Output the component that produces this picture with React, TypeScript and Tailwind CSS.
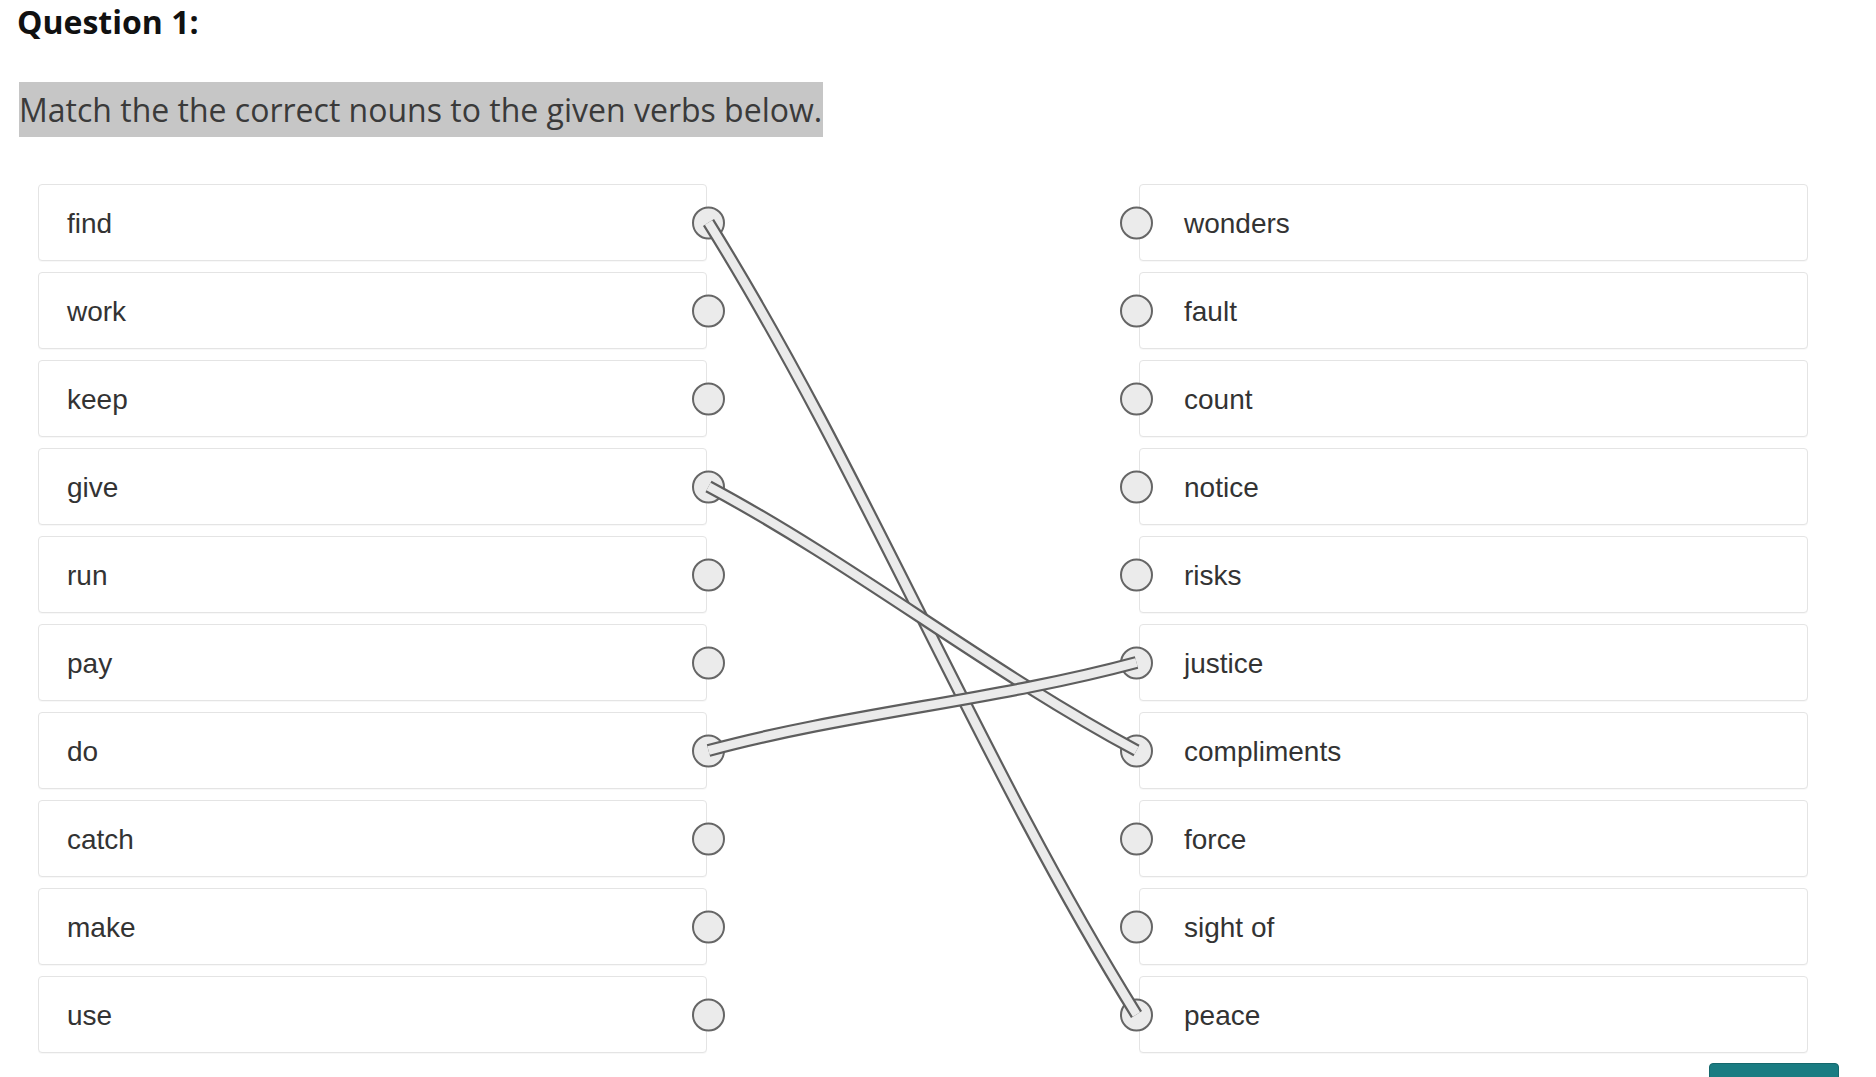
import React from "react";

const leftItems = ["find", "work", "keep", "give", "run", "pay", "do", "catch", "make", "use"];
const rightItems = ["wonders", "fault", "count", "notice", "risks", "justice", "compliments", "force", "sight of", "peace"];
const links: [number, number][] = [
  [0, 9],
  [3, 6],
  [6, 5],
];

const PITCH = 88;
const LX = 670.5;
const RX = 1098.5;
const CY0 = 38.5;

function ropePath(a: number, b: number) {
  const x1 = LX;
  const y1 = CY0 + a * PITCH;
  const x2 = RX;
  const y2 = CY0 + b * PITCH;
  const dx = (x2 - x1) / 3;
  const dy = (y2 - y1) / 3;
  const phi = (-3.5 * Math.PI) / 180;
  const ux = dx * Math.cos(phi) - dy * Math.sin(phi);
  const uy = dx * Math.sin(phi) + dy * Math.cos(phi);
  return `M ${x1} ${y1} C ${x1 + ux} ${y1 + uy} ${x2 - ux} ${y2 - uy} ${x2} ${y2}`;
}

function Circle({ side }: { side: "left" | "right" }) {
  return (
    <span
      className={
        side === "left"
          ? "absolute right-[-19px] top-1/2 -translate-y-1/2 w-[33px] h-[33px] rounded-full bg-[#ebebeb] border-2 border-[#666666]"
          : "absolute left-[-20px] top-1/2 -translate-y-1/2 w-[33px] h-[33px] rounded-full bg-[#ebebeb] border-2 border-[#666666]"
      }
    />
  );
}

export default function App() {
  return (
    <div className="min-h-screen bg-white pl-[19px] overflow-hidden">
      <h1 className="font-['Open_Sans',sans-serif] font-bold text-[32px] leading-[43px] text-[#111] ml-[-2px]">
        Question 1:
      </h1>
      <div className="mt-[39px]">
        <span className="inline-block bg-[#c6c6c6] font-['Open_Sans',sans-serif] text-[32px] leading-[55px] text-[#3a3a3a] pr-[1px]">
          Match the the correct nouns to the given verbs below.
        </span>
      </div>

      <div className="relative ml-[19px] mt-[47px] w-[1770px] flex justify-between font-['Liberation_Sans',Arial,sans-serif] text-[28px] text-[#333333]">
        <div className="flex flex-col gap-[11px] w-[669px]">
          {leftItems.map((t) => (
            <div
              key={t}
              className="relative h-[77px] flex items-center pl-[28px] pt-[2px] bg-white border border-[#e4e4e4] rounded-[4px] shadow-[0_1px_1px_rgba(0,0,0,0.03)]"
            >
              <span>{t}</span>
              <Circle side="left" />
            </div>
          ))}
        </div>
        <div className="flex flex-col gap-[11px] w-[669px]">
          {rightItems.map((t) => (
            <div
              key={t}
              className="relative h-[77px] flex items-center pl-[44px] pt-[2px] bg-white border border-[#e4e4e4] rounded-[4px] shadow-[0_1px_1px_rgba(0,0,0,0.03)]"
            >
              <Circle side="right" />
              <span>{t}</span>
            </div>
          ))}
        </div>

        <svg
          className="absolute left-0 top-0 z-10 pointer-events-none overflow-visible"
          width={1770}
          height={869}
          viewBox="0 0 1770 869"
        >
          {links.map(([a, b]) => (
            <g key={`${a}-${b}`}>
              <path d={ropePath(a, b)} fill="none" stroke="#5e5e5e" strokeWidth={13} strokeLinecap="butt" />
              <path d={ropePath(a, b)} fill="none" stroke="#ebebeb" strokeWidth={8.6} strokeLinecap="butt" />
            </g>
          ))}
        </svg>
      </div>

      <div className="flex justify-end pr-[37px] mt-[10px]">
        <div className="w-[130px] h-[44px] rounded-t-[4px] bg-[#1a7c82] border border-[#15686d]" />
      </div>
    </div>
  );
}
